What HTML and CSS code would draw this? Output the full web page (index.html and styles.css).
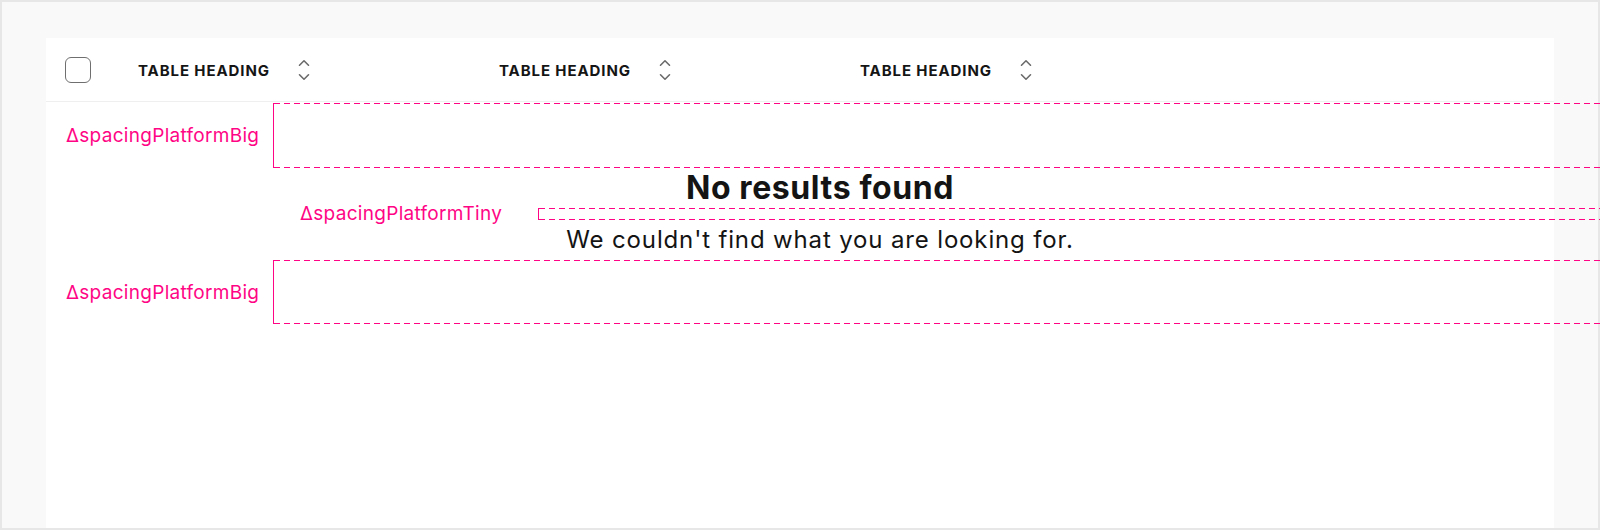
FILE: index.html
```html
<!DOCTYPE html>
<html lang="en">
<head>
  <meta charset="UTF-8" />
  <meta name="viewport" content="width=device-width, initial-scale=1.0"/>
  <title>Table empty state spacing</title>
  <link rel="stylesheet" href="styles.css">
</head>
<body>

<div class="frame">
  <div class="panel">

    <div class="table-head">
      <div class="cell-check"><span class="checkbox"></span></div>
      <div class="th">
        <span class="th-text">Table heading</span>
        <svg class="sort" width="12" height="22" viewBox="0 0 12 22"><path d="M1.5 6.2 L6 1.8 L10.5 6.2 M1.5 15.8 L6 20.2 L10.5 15.8"/></svg>
      </div>
      <div class="th">
        <span class="th-text">Table heading</span>
        <svg class="sort" width="12" height="22" viewBox="0 0 12 22"><path d="M1.5 6.2 L6 1.8 L10.5 6.2 M1.5 15.8 L6 20.2 L10.5 15.8"/></svg>
      </div>
      <div class="th">
        <span class="th-text">Table heading</span>
        <svg class="sort" width="12" height="22" viewBox="0 0 12 22"><path d="M1.5 6.2 L6 1.8 L10.5 6.2 M1.5 15.8 L6 20.2 L10.5 15.8"/></svg>
      </div>
    </div>

    <div class="empty">
      <div class="spec spec-big">
        <span class="spec-label">ΔspacingPlatformBig</span>
        <div class="spec-box"></div>
      </div>

      <h3 class="empty-title">No results found</h3>

      <div class="spec spec-tiny">
        <span class="spec-label">ΔspacingPlatformTiny</span>
        <div class="spec-box"></div>
      </div>

      <p class="empty-text">We couldn't find what you are looking for.</p>

      <div class="spec spec-big spec-last">
        <span class="spec-label">ΔspacingPlatformBig</span>
        <div class="spec-box"></div>
      </div>
    </div>

  </div>
</div>

</body>
</html>
```

FILE: styles.css
```css
:root {
  --pink: #ff0585;
  --ink: #141414;
}

html, body {
  margin: 0;
  padding: 0;
}

body {
  font-family: 'Inter', 'Noto Sans', sans-serif;
  color: var(--ink);
  overflow: hidden;
}

.frame {
  width: 1600px;
  height: 530px;
  box-sizing: border-box;
  border: 2px solid #e7e7e7;
  background: #f9f9f9;
  padding: 36px 44px 0;
  display: flex;
  flex-direction: column;
}

.panel {
  flex: 1;
  background: #fff;
}

/* table header */
.table-head {
  display: flex;
  align-items: center;
  height: 64px;
  padding-top: 2px;
  box-sizing: border-box;
  border-bottom: 1px solid #efefef;
}

.cell-check {
  width: 92px;
  padding-left: 19px;
  box-sizing: border-box;
  display: flex;
  align-items: center;
}

.checkbox {
  width: 26px;
  height: 26px;
  box-sizing: border-box;
  border: 1.5px solid #6f6f6f;
  border-radius: 6px;
  margin-top: -2px;
}

.th {
  width: 361px;
  display: flex;
  align-items: center;
  gap: 28px;
}

.th-text {
  font-size: 15px;
  font-weight: 700;
  letter-spacing: 0.9px;
  text-transform: uppercase;
  color: #151515;
}

.sort {
  fill: none;
  stroke: #6a6a6a;
  stroke-width: 1.6;
  stroke-linecap: round;
  stroke-linejoin: round;
  margin-top: -1px;
}

/* empty state with spacing annotations */
.empty {
  padding-top: 1px;
}

.spec {
  display: flex;
  align-items: center;
}

.spec-label {
  color: var(--pink);
  font-size: 19px;
  letter-spacing: 0.3px;
  white-space: nowrap;
}

.spec-box {
  flex: 1;
  margin-right: -46px;
  border-left: 1px solid var(--pink);
  box-sizing: border-box;
  background:
    repeating-linear-gradient(to right, var(--pink) 0 6px, transparent 6px 10px) left top / 100% 1px no-repeat,
    repeating-linear-gradient(to right, var(--pink) 0 6px, transparent 6px 10px) left bottom / 100% 1px no-repeat;
}

.spec-big .spec-label {
  width: 227px;
  padding-left: 20px;
  box-sizing: border-box;
}

.spec-big .spec-box {
  height: 65px;
}

.spec-last .spec-box {
  height: 64px;
}

.spec-tiny {
  height: 12px;
}

.spec-tiny .spec-label {
  width: 492px;
  padding-left: 254px;
  box-sizing: border-box;
  line-height: 12px;
}

.spec-tiny .spec-box {
  height: 12px;
}

.empty-title {
  margin: 0;
  padding-left: 40px;
  text-align: center;
  font-size: 32px;
  font-weight: 700;
  letter-spacing: 0.6px;
  line-height: 40px;
  color: var(--ink);
}

.empty-text {
  margin: 0;
  padding-left: 40px;
  text-align: center;
  font-size: 24px;
  letter-spacing: 0.85px;
  line-height: 40px;
  color: var(--ink);
}
```
